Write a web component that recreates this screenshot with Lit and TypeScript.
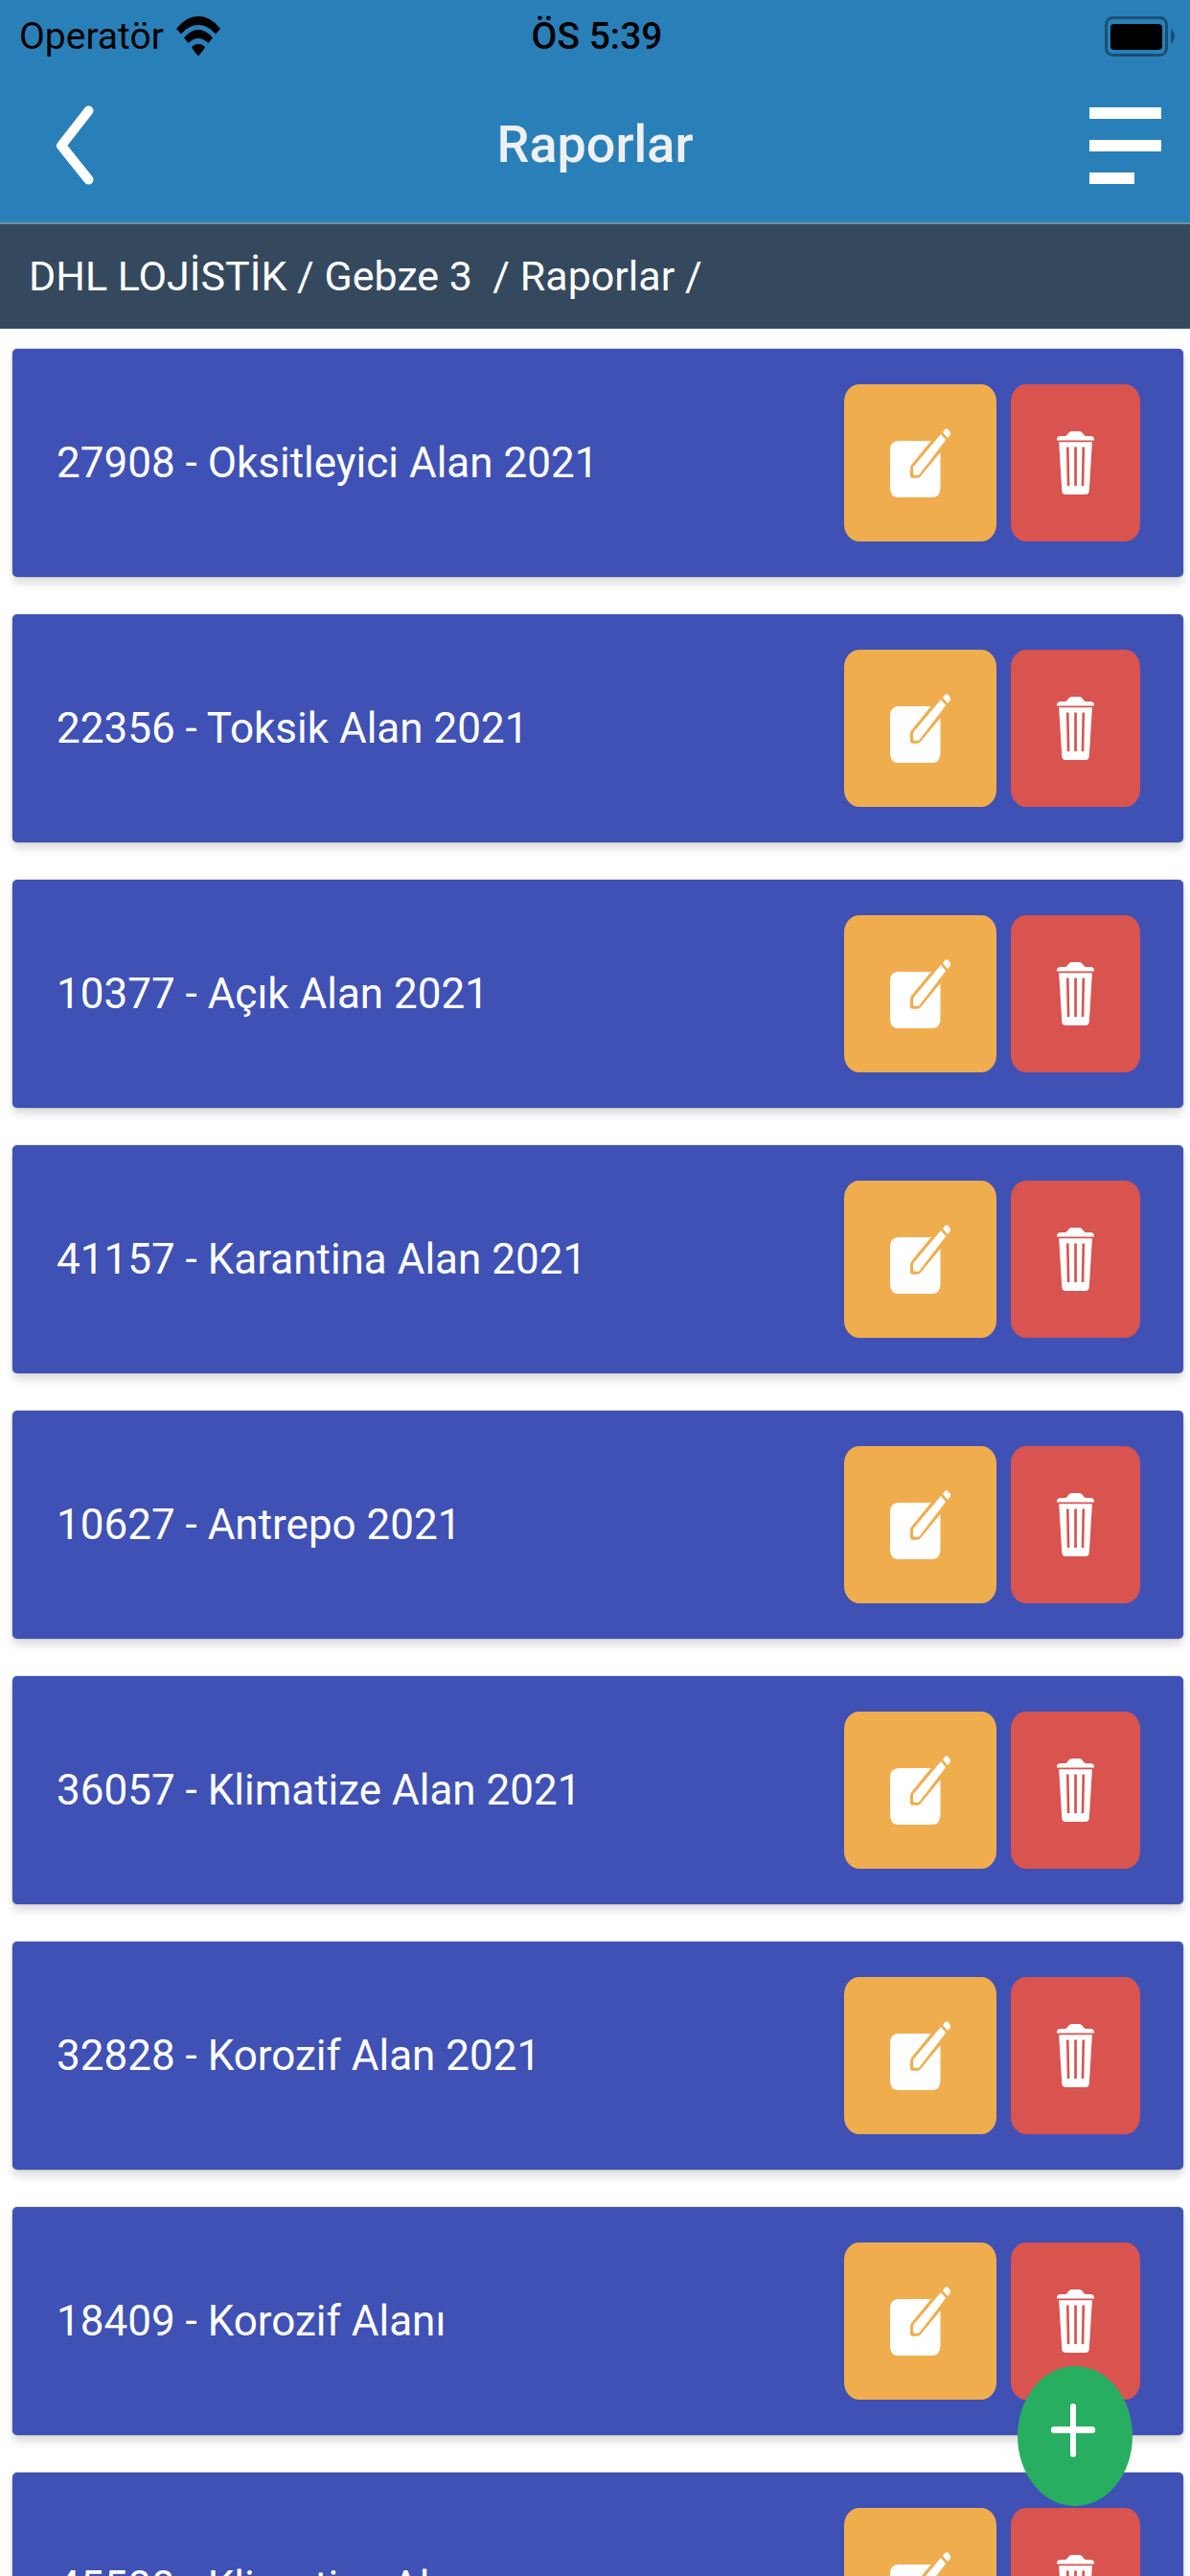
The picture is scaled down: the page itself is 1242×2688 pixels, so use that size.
import { LitElement, html, css } from "lit";
import { customElement, property, state } from "lit/decorators.js";

interface Report {
  code: string;
  name: string;
}

@customElement("status-bar")
class StatusBar extends LitElement {
  static styles = css`
    :host {
      display: grid;
      grid-template-columns: 1fr auto 1fr;
      align-items: center;
      height: 76px;
      padding: 0 16px 0 20px;
      color: #000;
      font-size: 39px;
      line-height: 48px;
    }
    .carrier {
      display: flex;
      align-items: center;
      gap: 13px;
    }
    .time {
      font-weight: 500;
    }
    .wifi,
    .battery {
      display: block;
    }
    .battery {
      justify-self: end;
    }
  `;

  render() {
    return html`
      <div class="carrier">
        <span>Operatör</span>
        <svg class="wifi" width="46" height="42" viewBox="0 0 46 42" aria-hidden="true">
          <path d="M0 13 Q10 0 23 0 Q36 0 46 13 L41 18.500 Q33 9 23 9 Q13 9 5 18.500 Z" />
          <path d="M8 22.500 Q15 14 23 14 Q31 14 38 22.500 L33.500 28 Q28 23 23 23 Q18 23 12.500 28 Z" />
          <path d="M16 32 Q23 25.500 30 32 Q29 35 23 41.500 Q17 35 16 32 Z" />
        </svg>
      </div>
      <span class="time">ÖS 5:39</span>
      <svg class="battery" width="73" height="42" viewBox="0 0 73 42" aria-hidden="true">
        <rect x="1.500" y="1.500" width="63" height="39" rx="7" fill="none" stroke="#1b4f72" stroke-width="3" />
        <rect x="6" y="8" width="54" height="27" rx="4" />
        <path d="M69 13 Q73 16 73 21 Q73 26 69 29 Z" fill="#1b4f72" />
      </svg>
    `;
  }
}

@customElement("nav-bar")
class NavBar extends LitElement {
  @property() heading = "";

  static styles = css`
    :host {
      display: grid;
      grid-template-columns: 1fr auto 1fr;
      align-items: center;
      height: 150px;
      padding: 0 30px;
    }
    .title {
      margin: 0;
      color: #f0f0f0;
      font-size: 54px;
      line-height: 72px;
      font-weight: 500;
    }
    .icon-button {
      display: flex;
      border: 0;
      padding: 0;
      background: none;
      cursor: pointer;
    }
    .back {
      padding: 0 28px;
    }
    .menu {
      justify-self: end;
    }
  `;

  render() {
    return html`
      <button class="icon-button back" aria-label="Geri">
        <svg width="40" height="83" viewBox="0 0 40 83" fill="none" stroke="#fff" aria-hidden="true">
          <path d="M34.500 5.500 L6 42 L34.500 77.500" stroke-width="10" stroke-linecap="round" stroke-linejoin="round" />
        </svg>
      </button>
      <h1 class="title">${this.heading}</h1>
      <button class="icon-button menu" aria-label="Menü">
        <svg width="75" height="83" viewBox="0 0 75 83" fill="#fff" aria-hidden="true">
          <rect x="0" y="2" width="75" height="12" />
          <rect x="0" y="36" width="75" height="12" />
          <rect x="0" y="70" width="47" height="12" />
        </svg>
      </button>
    `;
  }
}

@customElement("report-card")
class ReportCard extends LitElement {
  @property({ attribute: false }) report: Report = { code: "", name: "" };

  static styles = css`
    :host {
      display: flex;
      align-items: center;
      gap: 15px;
      box-sizing: border-box;
      height: 238px;
      padding: 0 45px 0 46px;
      border-radius: 5px;
      background: #3f51b5;
      color: #fff;
      box-shadow: 0 0 2px rgba(0, 0, 0, 0.4), 0 7px 9px rgba(0, 0, 0, 0.13);
    }
    .label {
      flex: 1;
      min-width: 0;
      font-size: 44px;
      line-height: 60px;
    }
    .action {
      display: flex;
      align-items: center;
      justify-content: center;
      height: 164px;
      border: 0;
      border-radius: 16px / 18px;
      padding: 0 48px;
      cursor: pointer;
    }
    .edit {
      background: #f0ad4e;
    }
    .delete {
      background: #d9534f;
    }
  `;

  render() {
    const { code, name } = this.report;
    return html`
      <span class="label">${code} - ${name}</span>
      <button class="action edit" aria-label="Düzenle ${code}">
        <svg width="63" height="72" viewBox="0 0 63 72" fill="#fff" aria-hidden="true">
          <path d="M42.700 13 H9 Q0 13 0 23 V62 Q0 72 9 72 H43.500 Q52.500 72 52.500 62 V25 L31.800 50 Q30.500 51.700 28.500 51.700 H23.500 Q21 51.700 21 49 V41.500 Q21 39.500 22.300 38 Z" />
          <path d="M24 41.500 Q24 40.500 24.800 39.600 L53 6 L58.200 12 L31 47.500 Q30 48.700 28.800 48.700 H25.500 Q24 48.700 24 47 Z" />
          <path d="M55 4 L57.200 1.200 Q59 -0.800 61 1.600 L62.300 3.300 Q63.800 5.500 62.300 7.400 L60 10 Z" />
        </svg>
      </button>
      <button class="action delete" aria-label="Sil ${code}">
        <svg width="39" height="66" viewBox="0 0 39 66" fill="#fff" aria-hidden="true">
          <path d="M0 9.600 V8.500 Q0 5 4 5 H8 Q10 5 11 3.500 Q13 0 15.500 0 H23.500 Q26 0 28 3.500 Q29 5 31 5 H35 Q39 5 39 8.500 V9.600 Z" />
          <path fill-rule="evenodd" d="M2.200 11.300 H36.900 L33.800 62 Q33.500 66 30 66 H9 Q5.600 66 5.300 62 Z M10 16.500 L10.800 57 H13.400 L12.600 16.500 Z M18.200 16.500 V57 H20.900 V16.500 Z M26.500 16.500 L25.700 57 H28.300 L29.100 16.500 Z" />
        </svg>
      </button>
    `;
  }
}

@customElement("app-root")
class AppRoot extends LitElement {
  @state() private reports: Report[] = [
    { code: "27908", name: "Oksitleyici Alan 2021" },
    { code: "22356", name: "Toksik Alan 2021" },
    { code: "10377", name: "Açık Alan 2021" },
    { code: "41157", name: "Karantina Alan 2021" },
    { code: "10627", name: "Antrepo 2021" },
    { code: "36057", name: "Klimatize Alan 2021" },
    { code: "32828", name: "Korozif Alan 2021" },
    { code: "18409", name: "Korozif Alanı" },
    { code: "45500", name: "Klimatize Alan" },
  ];

  static styles = css`
    :host {
      display: flex;
      flex-direction: column;
      height: 100vh;
      background: #fff;
      font-family: Roboto, sans-serif;
    }
    .header {
      flex: none;
      padding-bottom: 6px;
      border-bottom: 2px solid #7090a4;
      background: #2980b9;
    }
    .path {
      flex: none;
      padding: 24px 30px 25px;
      background: #34495e;
      color: #fff;
      font-size: 43px;
      line-height: 60px;
      white-space: pre;
    }
    .list {
      flex: 1;
      min-height: 0;
      overflow-y: auto;
      scrollbar-width: none;
      display: flex;
      flex-direction: column;
      gap: 39px;
      padding: 21px 7px 21px 13px;
    }
    .card {
      flex: none;
    }
    .add {
      position: fixed;
      right: 60px;
      bottom: 73px;
      display: flex;
      align-items: center;
      justify-content: center;
      width: 120px;
      height: 146px;
      border: 0;
      border-radius: 50%;
      padding: 0 4px 12px 0;
      background: #27ae60;
      cursor: pointer;
    }
  `;

  render() {
    return html`
      <header class="header">
        <status-bar></status-bar>
        <nav-bar heading="Raporlar"></nav-bar>
      </header>
      <nav class="path" aria-label="Konum">DHL LOJİSTİK / Gebze 3  / Raporlar /</nav>
      <main class="list">
        ${this.reports.map((r) => html`<report-card class="card" .report=${r}></report-card>`)}
      </main>
      <button class="add" aria-label="Rapor ekle">
        <svg width="46" height="56" viewBox="0 0 46 56" fill="#fff" aria-hidden="true">
          <rect x="20" y="0" width="6" height="56" rx="3" />
          <rect x="0" y="24" width="46" height="7" rx="3" />
        </svg>
      </button>
    `;
  }
}
